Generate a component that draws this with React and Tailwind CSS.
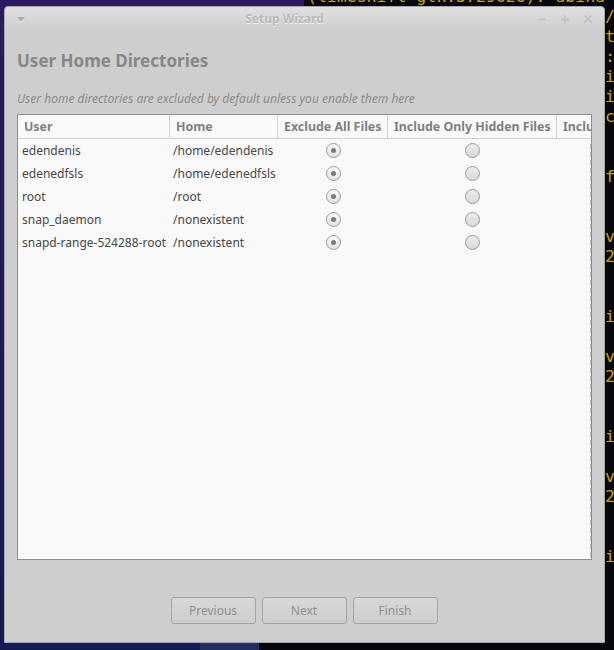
import React from "react";

const users = [
    {name: "edendenis", home: "/home/edendenis"},
    {name: "edenedfsls", home: "/home/edenedfsls"},
    {name: "root", home: "/root"},
    {name: "snap_daemon", home: "/nonexistent"},
    {name: "snapd-range-524288-root", home: "/nonexistent"},
];

// characters of the terminal that peek out at the right edge, one per line
const termEdge = ["", "/usr", "t", ":", "i", "i", "c", "", "", "f", "", "", "v", "2", "", "", "i", "", "v", "2", "", "", "i", "", "v", "2", "", "", "i", "", ""];

function Radio({checked}) {
    return <div
        className={"w-[15px] h-[15px] rounded-full border border-[#9b9b9b] flex items-center justify-center " +
            (checked ? "bg-[linear-gradient(to_bottom,#fbfbfb,#e2e2e2)]" : "bg-[linear-gradient(to_bottom,#ececec,#d9d9d9)]")}>
        {checked && <div className="w-[5px] h-[5px] rounded-full bg-[#7b7b7b]"/>}
    </div>
}

function WindowButton({children}) {
    return <button
        className="w-[85px] h-[27px] rounded-[3px] border border-[#a3a3a3] bg-[linear-gradient(to_bottom,#d8d8d8,#cdcdcd)] text-[12px] text-[#909090]">
        {children}
    </button>
}

export default function App() {
    return <div className="relative w-[614px] h-[650px] overflow-hidden bg-[linear-gradient(to_bottom,#2b1a62,#1e1b5a_45%,#151a52)]"
                style={{fontFamily: '"Noto Sans", "Open Sans", sans-serif'}}>
        {/* terminal behind the dialog */}
        <div className="absolute left-[304px] top-0 right-0 bottom-0 bg-[#07070c]">
            <pre className="pl-[3px] mt-[-13px] text-[16.5px] leading-[20px] text-[#c9a800]"
                 style={{fontFamily: '"DejaVu Sans Mono", monospace'}}>
                <div>(timeshift-gtk:3729626): dbind-WARNING **: 10:42:17.305</div>
                {termEdge.slice(1).map((ch, i) => <div key={i}>{"Gtk-Message: 10:42:19.118: Fai" + ch}</div>)}
            </pre>
        </div>
        <div className="absolute left-[259px] top-[600px] right-0 bottom-0 bg-[#07070c]"/>
        <div className="absolute left-[200px] top-[600px] w-[59px] bottom-0 bg-[#252c5e]"/>

        {/* dialog */}
        <div className="absolute left-[4px] top-[6px] w-[601px] h-[637px] rounded-t-[4px] border border-[#a8a8a8] bg-[#cecece] flex flex-col">
            <div className="h-[24px] flex items-center rounded-t-[4px] bg-[linear-gradient(to_bottom,#e0e0e0,#cecece)]">
                <div className="w-[30px] flex justify-center pl-[1px]">
                    <div className="w-0 h-0 border-l-[4px] border-r-[4px] border-t-[4px] border-l-transparent border-r-transparent border-t-[#a9a9a9]"/>
                </div>
                <div className="flex-1 text-center text-[12px] font-bold text-[#bababa] [text-shadow:0_1px_0_#f2f2f2]">Setup Wizard</div>
                <div className="w-[70px] flex items-center gap-[13px] pl-[3px]">
                    <svg width="10" height="10" viewBox="0 0 10 10"><path d="M1 5.5h8" stroke="#bdbdbd" strokeWidth="1.6"/></svg>
                    <svg width="10" height="10" viewBox="0 0 10 10"><path d="M1 5.5h8M5 1.5v8" stroke="#bdbdbd" strokeWidth="1.6"/></svg>
                    <svg width="10" height="10" viewBox="0 0 10 10"><path d="M1.5 1.5l7 7M8.5 1.5l-7 7" stroke="#bdbdbd" strokeWidth="1.6"/></svg>
                </div>
            </div>

            <div className="flex-1 flex flex-col px-[12px]">
                <h1 className="mt-[19px] text-[17px] leading-[22px] font-bold text-[#878787]">User Home Directories</h1>
                <p className="mt-[19px] text-[12px] leading-[16px] italic text-[#8c8c8c]">User home directories are excluded by default unless you enable them here</p>

                <div className="mt-[7px] h-[446px] border border-[#8e8e8e] bg-[#f9f9f9] flex flex-col overflow-hidden">
                    <div className="h-[24px] shrink-0 grid grid-cols-[152px_108px_110px_169px_1fr] border-b border-[#d2d2d2] text-[12.4px] leading-[16px] font-bold text-[#7f7f7f]">
                        <div className="pl-[6px] flex items-center border-r border-[#d6d6d6]">User</div>
                        <div className="pl-[6px] flex items-center border-r border-[#d6d6d6]">Home</div>
                        <div className="pl-[6px] flex items-center border-r border-[#d6d6d6] whitespace-nowrap">Exclude All Files</div>
                        <div className="pl-[6px] flex items-center border-r border-[#d6d6d6] whitespace-nowrap">Include Only Hidden Files</div>
                        <div className="pl-[6px] flex items-center whitespace-nowrap overflow-hidden">Inclu</div>
                    </div>
                    <div className="relative flex-1">
                        <div className="absolute right-0 top-[5px] bottom-0 w-px bg-[repeating-linear-gradient(to_bottom,#c4c4c4_0_5px,transparent_5px_8px)]"/>
                        {users.map(u =>
                            <div key={u.name} className="h-[23px] grid grid-cols-[152px_108px_110px_169px_1fr] items-center text-[12px] text-[#474747]">
                                <div className="pl-[4px] whitespace-nowrap">{u.name}</div>
                                <div className="pl-[3px] whitespace-nowrap">{u.home}</div>
                                <div className="flex justify-center"><Radio checked/></div>
                                <div className="flex justify-center"><Radio/></div>
                                <div/>
                            </div>
                        )}
                    </div>
                </div>

                <div className="mt-[37px] flex justify-center gap-[6px] pr-[1px]">
                    <WindowButton>Previous</WindowButton>
                    <WindowButton>Next</WindowButton>
                    <WindowButton>Finish</WindowButton>
                </div>
            </div>
        </div>
    </div>
}
